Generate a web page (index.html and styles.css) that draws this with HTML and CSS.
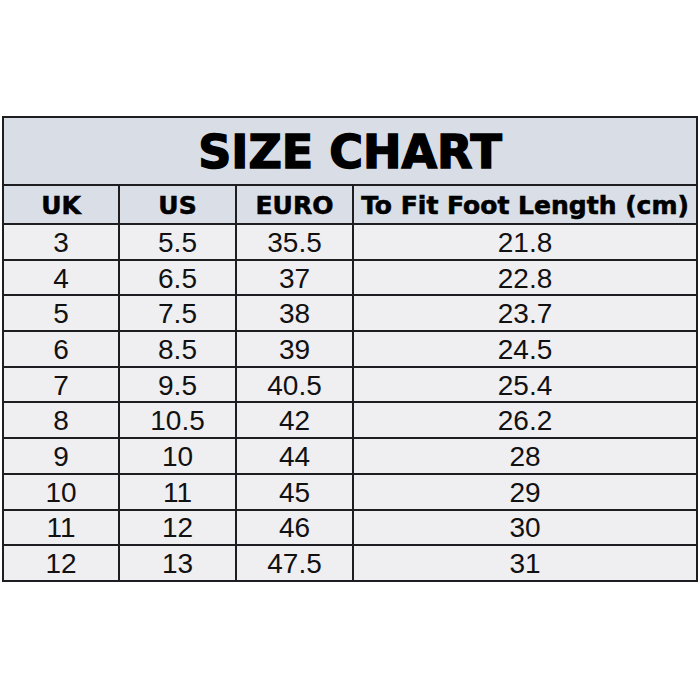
FILE: index.html
```html
<!DOCTYPE html>
<html>
<head>
<meta charset="utf-8">
<link rel="stylesheet" href="styles.css">
</head>
<body>
<div class="chart">
  <div class="cell title">SIZE CHART</div>
  <div class="cell head">UK</div>
  <div class="cell head">US</div>
  <div class="cell head">EURO</div>
  <div class="cell head">To Fit Foot Length (cm)</div>
  <div class="cell">3</div><div class="cell">5.5</div><div class="cell">35.5</div><div class="cell">21.8</div>
  <div class="cell">4</div><div class="cell">6.5</div><div class="cell">37</div><div class="cell">22.8</div>
  <div class="cell">5</div><div class="cell">7.5</div><div class="cell">38</div><div class="cell">23.7</div>
  <div class="cell">6</div><div class="cell">8.5</div><div class="cell">39</div><div class="cell">24.5</div>
  <div class="cell">7</div><div class="cell">9.5</div><div class="cell">40.5</div><div class="cell">25.4</div>
  <div class="cell">8</div><div class="cell">10.5</div><div class="cell">42</div><div class="cell">26.2</div>
  <div class="cell">9</div><div class="cell">10</div><div class="cell">44</div><div class="cell">28</div>
  <div class="cell">10</div><div class="cell">11</div><div class="cell">45</div><div class="cell">29</div>
  <div class="cell">11</div><div class="cell">12</div><div class="cell">46</div><div class="cell">30</div>
  <div class="cell">12</div><div class="cell">13</div><div class="cell">47.5</div><div class="cell">31</div>
</div>
</body>
</html>
```
FILE: styles.css
```css
html, body {
  margin: 0;
  padding: 0;
  background: #ffffff;
}
.chart {
  margin: 116px 0 0 2px;
  width: 696px;
  box-sizing: border-box;
  padding: 2px;
  background: #1e1e22;
  display: grid;
  grid-template-columns: 114px 115px 115px 342px;
  grid-template-rows: 66px 37px repeat(10, 33.7px);
  gap: 2px;
}
.cell {
  background: #efeef1;
  display: flex;
  align-items: center;
  justify-content: center;
  padding-top: 2px;
  font-family: "Liberation Sans", Arial, sans-serif;
  font-size: 28px;
  color: #111111;
  line-height: 1;
}
.title {
  grid-column: 1 / -1;
  background: #d8dde6;
  font-family: "DejaVu Sans", sans-serif;
  font-weight: bold;
  font-size: 46px;
  color: #000000;
  -webkit-text-stroke: 1.5px #000000;
}
.head {
  background: #d9dee7;
  font-family: "DejaVu Sans", sans-serif;
  font-weight: bold;
  font-size: 25px;
  color: #000000;
  white-space: nowrap;
  -webkit-text-stroke: 0.6px #000000;
}
```
